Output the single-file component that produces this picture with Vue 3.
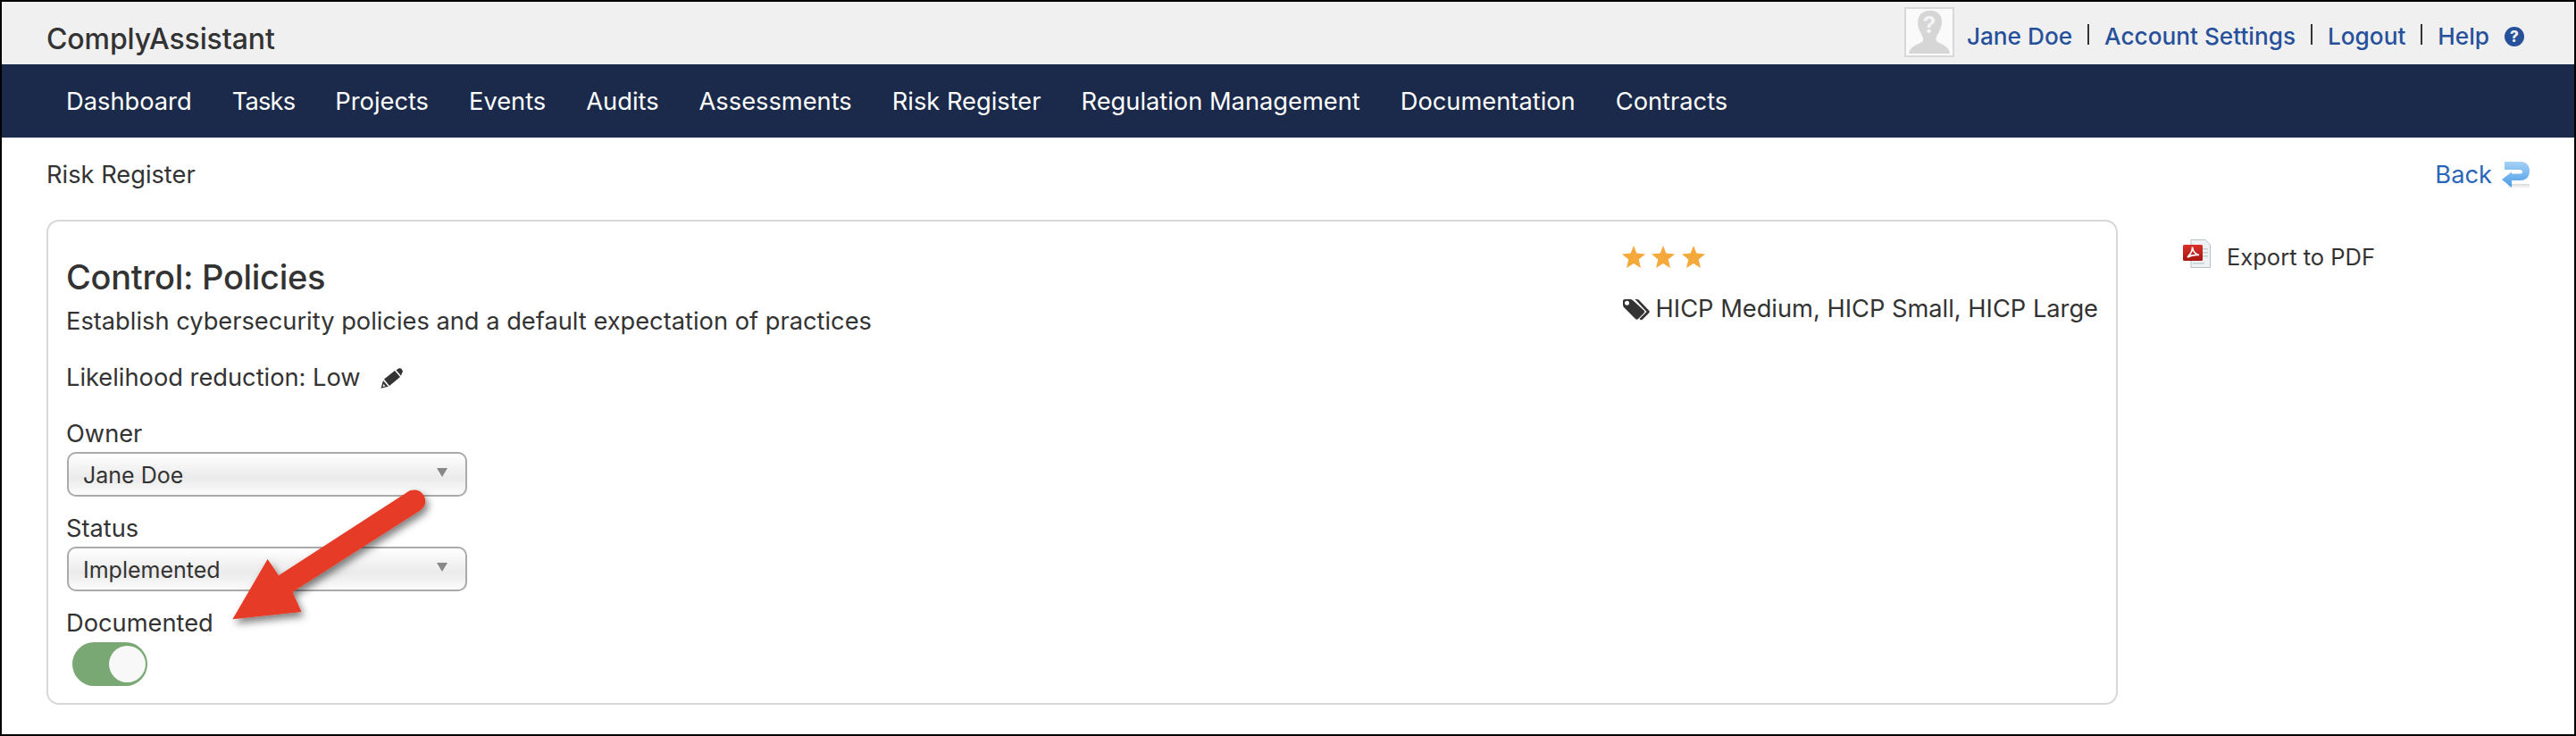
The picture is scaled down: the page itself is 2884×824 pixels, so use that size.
<script setup>
const navItems = ['Dashboard','Tasks','Projects','Events','Audits','Assessments','Risk Register','Regulation Management','Documentation','Contracts']
const stars = [1,2,3]
const fields = [{label:'Owner',value:'Jane Doe'},{label:'Status',value:'Implemented'}]
</script>

<template>
  <div class="page">
    <header class="top">
      <div class="logo">ComplyAssistant</div>
      <div class="user">
        <div class="avatar">
          <svg width="52" height="51" viewBox="0 0 52 51">
            <path fill="#d6d6d6" d="M3 50 C4 42 12 40 18 37 C20 35 19 32 17 28 C12 20 11 8 19 4 C24 1 32 1 36 5 C43 10 40 22 35 29 C33 32 33 35 35 37 C41 40 48 42 49 50 Z"/>
            <text x="26" y="27" text-anchor="middle" class="avq">?</text>
          </svg>
        </div>
        <a class="ulink">Jane Doe</a><i class="sep"></i>
        <a class="ulink">Account Settings</a><i class="sep"></i>
        <a class="ulink">Logout</a><i class="sep"></i>
        <a class="ulink">Help</a>
        <span class="qmark">?</span>
      </div>
    </header>
    <nav class="nav">
      <a v-for="n in navItems" :key="n" class="navitem">{{ n }}</a>
    </nav>
    <div class="crumbs">
      <span>Risk Register</span>
      <a class="back">Back
        <svg width="32" height="31" viewBox="0 0 32 31">
          <defs>
            <linearGradient id="bk" x1="0" y1="0" x2="0" y2="1">
              <stop offset="0" stop-color="#a5d2f5"/><stop offset="1" stop-color="#4a9be9"/>
            </linearGradient>
            <linearGradient id="bks" x1="0" y1="0" x2="0" y2="1">
              <stop offset="0" stop-color="#d8d8d8"/><stop offset="1" stop-color="#ffffff"/>
            </linearGradient>
          </defs>
          <rect x="8" y="26" width="24" height="5" fill="url(#bks)"/>
          <path fill="url(#bk)" d="M4 1 H22 C28 1 32 5 32 11 C32 18 28 22 22 22 H12 V30 L1 21 L12 12.500 V14.500 H21 C23 14.500 24 13.500 24 12.200 C24 11 23 10 21 10 H4 Z"/>
        </svg>
      </a>
    </div>
    <main class="body">
      <section class="card">
        <div class="left">
          <h1>Control: Policies</h1>
          <p class="desc">Establish cybersecurity policies and a default expectation of practices</p>
          <p class="likely">Likelihood reduction: Low
            <svg class="pencil" width="25" height="23" viewBox="0 0 25 23">
              <path fill="#333" d="M4 12.500 L16 3 L22 10 L10 20 Z"/>
              <path fill="#333" d="M3 14 L8.800 20.800 L.5 22.800 Z"/>
              <path fill="#fff" d="M3.300 18 L5.600 20.300 L2.600 21 Z"/>
              <path fill="#333" d="M17.500 2.300 L20 .8 C21.500 0 23 .3 24 1.700 C25 3 25.200 4.500 24 5.800 L23 8.800 Z"/>
            </svg>
          </p>
          <div v-for="f in fields" :key="f.label" class="field">
            <label>{{ f.label }}</label>
            <div class="select"><span>{{ f.value }}</span><i class="tri"></i></div>
          </div>
          <div class="field">
            <label>Documented</label>
            <div class="toggle"><i class="knob"></i></div>
          </div>
        </div>
        <div class="right">
          <div class="stars">
            <svg v-for="s in stars" :key="s" width="26" height="25" viewBox="0 0 26 25">
              <path fill="#f4a93a" d="M13 0 L16.300 8.600 L26 9.500 L18.700 15.600 L21 25 L13 20 L5 25 L7.300 15.600 L0 9.500 L9.700 8.600 Z"/>
            </svg>
          </div>
          <div class="tags">
            <svg width="31" height="25" viewBox="0 0 31 25">
              <path fill="#333" fill-rule="evenodd" d="M1 3 C1 1.800 2 1 3 1 H9 C10 1 11 1.300 11.800 2 L24.500 13.500 C25.500 14.500 25.500 15.500 24.500 16.500 L18 23 C17 24 16 24 15 23 L2 10 C1.300 9.300 1 8.500 1 7.500 Z M5.500 2.800 A2.500 2.500 0 1 0 5.501 7.800 A2.500 2.500 0 1 0 5.500 2.800 Z"/>
              <path fill="#333" d="M14.500 1 H16.500 C17.500 1 18.300 1.300 19 2 L30 13.500 C31 14.500 31 15.500 30 16.500 L23 23.500 C22 24.500 20.800 24.300 20 23.500 L19.500 23 L27.500 15 L14.500 1 Z"/>
            </svg>
            <span>HICP Medium, HICP Small, HICP Large</span>
          </div>
        </div>
      </section>
      <aside class="side">
        <svg width="31" height="32" viewBox="0 0 31 32">
          <path fill="#eef2f3" stroke="#b5c1c6" d="M9 .5 H25 L30.500 6 V31.500 H9 Z"/>
          <path fill="#c3d0d4" d="M22 10 H28 V11.500 H22 Z M22 14 H28 V15.500 H22 Z M22 18 H28 V19.500 H22 Z M11 26 H24 V27.500 H11 Z"/>
          <defs>
            <linearGradient id="pdfr" x1="0" y1="0" x2="0" y2="1">
              <stop offset="0" stop-color="#d9302a"/><stop offset="1" stop-color="#a81612"/>
            </linearGradient>
          </defs>
          <rect x="0" y="6" width="22" height="18" rx="1.500" fill="url(#pdfr)"/>
          <path fill="none" stroke="#fff" stroke-width="1.700" d="M5 20 C8 17 11 13 10.500 8.500 C11 13 14 16.500 18 17.500 C14 17 9 17.500 5 20 Z"/>
        </svg>
        <span>Export to PDF</span>
      </aside>
    </main>
    <svg class="arrow" width="240" height="170" viewBox="0 0 240 170">
      <defs>
        <filter id="sh" x="-20%" y="-20%" width="140%" height="140%">
          <feDropShadow dx="3" dy="5" stdDeviation="4" flood-color="#000" flood-opacity=".5"/>
        </filter>
      </defs>
      <path filter="url(#sh)" fill="#e63a26" d="M0.400 153.300 L39.600 86 L52 104.300 L196 11 C202 7 210 8 214 14 C218 20 217 27 210 31.700 L67.500 122.700 L77.500 145 Z"/>
    </svg>
  </div>
</template>

<style>
html, body { margin: 0; background: #fff; }
</style>

<style scoped>
.page {
  position: relative;
  box-sizing: border-box;
  width: 2884px;
  height: 824px;
  border: 2px solid #000;
  background: #fff;
  color: #333;
  font-family: Inter, "Liberation Sans", sans-serif;
  font-size: 27.25px;
  overflow: hidden;
}
.top {
  display: flex;
  justify-content: space-between;
  height: 70px;
  background: #f0f0f0;
  padding: 0 56px 0 50px;
  box-sizing: border-box;
}
.logo { font-size: 32px; font-weight: 500; line-height: 36px; padding-top: 24px; letter-spacing: -0.1px; }
.user { display: flex; align-items: flex-start; color: #27509b; font-size: 26.2px; font-weight: 500; line-height: 32px; }
.avatar {
  box-sizing: border-box;
  width: 56px;
  height: 56px;
  margin: 6px 14px 0 0;
  border: 2px solid #d8d8d8;
  background: #fafafa;
}
.avatar svg { display: block; }
.avq { fill: #f4f4f4; font-size: 26px; font-weight: 700; font-family: Inter, sans-serif; }
.ulink { margin-top: 23px; white-space: nowrap; }
.sep { width: 2px; height: 23px; background: #333; margin: 25px 17px 0; }
.qmark {
  width: 22px;
  height: 22px;
  margin: 28px 0 0 17px;
  border-radius: 50%;
  background: #27509b;
  color: #f0f0f0;
  font-size: 17px;
  font-weight: 800;
  line-height: 22px;
  text-align: center;
}
.nav {
  display: flex;
  gap: 45px;
  align-items: center;
  height: 82px;
  padding-left: 72px;
  background: #1b2a4a;
  color: #fff;
  font-size: 27.27px;
}
.navitem { white-space: nowrap; }
.navitem:nth-child(2) { letter-spacing: -0.8px; }
.crumbs {
  display: flex;
  justify-content: space-between;
  align-items: center;
  height: 30px;
  padding: 26px 50px 36px;
}
.back { display: flex; align-items: center; gap: 10px; color: #2a66b8; }
.body { display: flex; align-items: flex-start; padding-left: 50px; }
.card {
  box-sizing: border-box;
  display: flex;
  justify-content: space-between;
  width: 2319px;
  height: 543px;
  border: 2px solid #d8d8d8;
  border-radius: 14px;
  padding: 0 20px;
}
.left { padding-top: 40px; }
h1 { margin: 0; font-size: 38px; font-weight: 500; line-height: 44px; letter-spacing: -0.3px; }
.desc { margin: 10px 0 0; line-height: 36px; }
.likely { display: flex; align-items: center; gap: 22px; margin: 27px 0 0; line-height: 36px; }
.field { margin-top: 21px; }
.likely + .field { margin-top: 30px; }
.field label { display: block; line-height: 30px; }
.select {
  box-sizing: border-box;
  display: flex;
  align-items: center;
  justify-content: space-between;
  width: 448px;
  height: 50px;
  margin: 5px 0 0 1px;
  padding: 2px 20px 0 16px;
  border: 2px solid #aaa;
  border-radius: 10px;
  background: linear-gradient(#fff 0%, #f4f4f4 30%, #ebebeb 60%, #fbfbfb 100%);
  font-size: 25px;
}
.tri { width: 0; height: 0; margin-top: -6px; border-left: 6.5px solid transparent; border-right: 6.5px solid transparent; border-top: 10px solid #888; }
.toggle {
  box-sizing: border-box;
  width: 84px;
  height: 49px;
  margin: 6px 0 0 7px;
  padding: 4px 2px 0 0;
  border-radius: 25px;
  background: #7aa874;
  display: flex;
  justify-content: flex-end;
}
.knob { width: 41px; height: 41px; border-radius: 50%; background: #f8f8f8; }
.right { padding-top: 27px; }
.stars { display: flex; gap: 7.5px; height: 26px; }
.tags { display: flex; align-items: center; gap: 7px; margin-top: 27px; line-height: 36px; white-space: nowrap; }
.side { display: flex; align-items: flex-start; gap: 18px; margin-left: 73px; padding-top: 22px; font-size: 25.5px; line-height: 40px; }
.arrow { position: absolute; left: 258px; top: 538px; overflow: visible; }
</style>
